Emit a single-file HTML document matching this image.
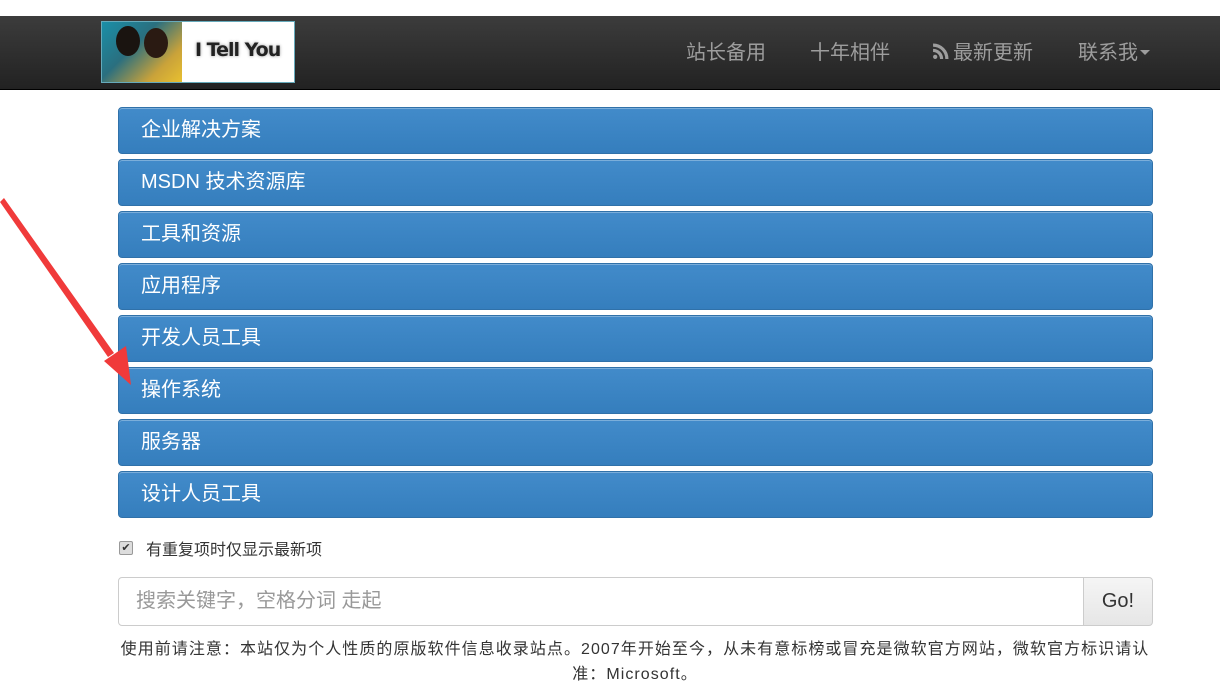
<!DOCTYPE html>
<html><head><meta charset="utf-8"><style>
*{margin:0;padding:0;box-sizing:border-box}
body{width:1220px;height:689px;overflow:hidden;background:#fff;font-family:"Liberation Sans","Noto Sans CJK SC",sans-serif;position:relative}
.nav{position:absolute;top:16px;left:0;width:1220px;height:74px;background:linear-gradient(#3c3c3c,#222);border-bottom:1px solid #000}
.logo{position:absolute;left:101px;top:5px;width:194px;height:62px;background:#fff;border:1px solid #6ab}
.pic{position:absolute;left:0;top:0;width:80px;height:60px;background:linear-gradient(135deg,#1a8fa8 0%,#2a6f7f 40%,#c9a23a 75%,#e8c030 100%)}
.pic:before{content:"";position:absolute;left:14px;top:4px;width:24px;height:30px;border-radius:50%;background:#1a1410}
.pic:after{content:"";position:absolute;left:42px;top:6px;width:24px;height:30px;border-radius:50%;background:#2a1a12}
.lt{position:absolute;left:93px;top:17px;font-size:19px;color:#222;font-weight:bold;font-family:"DejaVu Sans",sans-serif;letter-spacing:-1px;text-shadow:0 0 3px #999}
.ni{position:absolute;top:20px;font-size:20px;color:#9d9d9d}
.p{position:absolute;left:118px;width:1035px;height:47px;border-radius:4px;background:linear-gradient(#428bca,#357ebd);border:1px solid #3071a9;color:#fff;font-size:20px;line-height:45px;padding-left:22px;box-shadow:inset 0 1px 0 rgba(255,255,255,.3)}
.cb{position:absolute;left:119px;top:541px;width:14px;height:14px;border:1px solid #999;border-radius:2px;background:#ddd;font-size:11px;line-height:12px;text-align:center;color:#333}
.ct{position:absolute;left:146px;top:536px;font-size:16px;color:#333}
.in{position:absolute;left:118px;top:577px;width:966px;height:49px;border:1px solid #ccc;border-radius:4px 0 0 4px;font-size:20px;color:#999;line-height:47px;padding-left:17px}
.go{position:absolute;left:1083px;top:577px;width:70px;height:49px;border:1px solid #ccc;border-radius:0 4px 4px 0;background:linear-gradient(#f5f5f5,#e6e6e6);font-size:20px;color:#333;text-align:center;line-height:47px}
.ft{position:absolute;left:100px;top:637px;width:1070px;text-align:center;font-size:16px;letter-spacing:1.05px;color:#333;line-height:25px}
</style></head><body>
<div class="nav">
<div class="logo"><div class="pic"></div><div class="lt">I Tell You</div></div>
<div class="ni" style="left:686px">站长备用</div>
<div class="ni" style="left:810px">十年相伴</div>
<div class="ni" style="left:932px"><svg width="17" height="17" viewBox="0 0 16 16" style="vertical-align:-1px;margin-right:4px"><circle cx="3" cy="13" r="2" fill="#9d9d9d"/><path d="M1 7a8 8 0 0 1 8 8M1 2a13 13 0 0 1 13 13" stroke="#9d9d9d" stroke-width="3" fill="none"/></svg>最新更新</div>
<div class="ni" style="left:1078px">联系我<span style="display:inline-block;border-left:5px solid transparent;border-right:5px solid transparent;border-top:5px solid #9d9d9d;vertical-align:4px;margin-left:2px"></span></div>
</div>
<div class="p" style="top:107px">企业解决方案</div>
<div class="p" style="top:159px">MSDN 技术资源库</div>
<div class="p" style="top:211px">工具和资源</div>
<div class="p" style="top:263px">应用程序</div>
<div class="p" style="top:315px">开发人员工具</div>
<div class="p" style="top:367px">操作系统</div>
<div class="p" style="top:419px">服务器</div>
<div class="p" style="top:471px">设计人员工具</div>
<svg style="position:absolute;left:0;top:190px" width="140" height="200"><path d="M0 12 L4 8 L114 163 L108 167 Z" fill="#f03a3a"/><path d="M104 171 L126 156 L131 195 Z" fill="#f03a3a"/></svg>
<div class="cb">✔</div><div class="ct">有重复项时仅显示最新项</div>
<div class="in">搜索关键字，空格分词 走起</div>
<div class="go">Go!</div>
<div class="ft">使用前请注意：本站仅为个人性质的原版软件信息收录站点。2007年开始至今，从未有意标榜或冒充是微软官方网站，微软官方标识请认<br>准：Microsoft。</div>
</body></html>
